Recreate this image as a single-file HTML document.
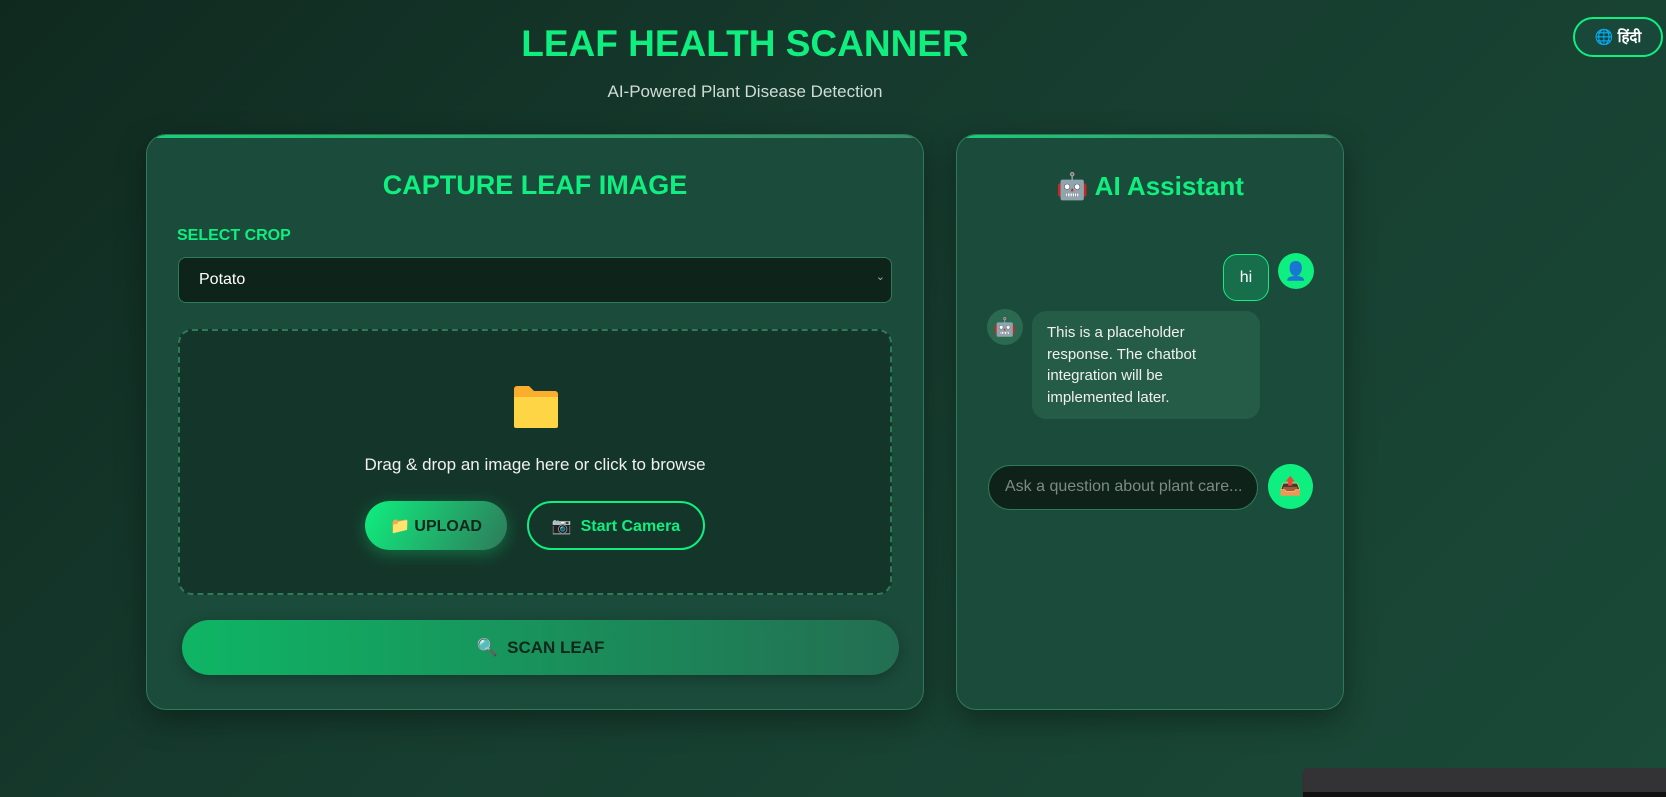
<!DOCTYPE html>
<html><head><meta charset="utf-8"><style>
*{box-sizing:border-box;margin:0;padding:0}
body{width:1666px;height:797px;overflow:hidden;position:relative;font-family:"Liberation Sans",sans-serif;background:linear-gradient(135deg,#10291f 0%,#163b2e 40%,#1a4a38 100%)}
.a{position:absolute}
.ttl{left:0;width:1490px;top:23px;text-align:center;color:#0fef7f;font-size:37px;font-weight:bold;letter-spacing:0}
.sub{left:0;width:1490px;top:82px;text-align:center;color:#d0dcd6;font-size:17px}
.card{background:#1b4b3b;border:1.5px solid #2f7a58;border-radius:20px;box-shadow:0 10px 30px rgba(0,0,0,.35);overflow:hidden}
.card:before{content:"";position:absolute;left:0;right:0;top:0;height:3px;background:linear-gradient(90deg,#18d078,#3a8a68)}
.h2{color:#0fef7f;font-weight:bold;font-size:27px;text-align:center}
.btn{border-radius:26px;font-weight:bold;font-size:16px;display:flex;align-items:center;justify-content:center}
.av{border-radius:50%;display:flex;align-items:center;justify-content:center}
</style></head><body>
<div class="a ttl">LEAF HEALTH SCANNER</div>
<div class="a sub">AI-Powered Plant Disease Detection</div>
<div class="a btn" style="left:1573px;top:17px;width:90px;height:40px;border:2.5px solid #0fef7f;background:#19473a;color:#fff;font-size:15px;border-radius:22px">🌐&nbsp;हिंदी</div>

<div class="a card" style="left:146px;top:134px;width:778px;height:576px">
  <div class="a h2" style="left:0;width:100%;top:35px">CAPTURE LEAF IMAGE</div>
  <div class="a" style="left:30px;top:92px;color:#0fef7f;font-size:16px;font-weight:bold">SELECT CROP</div>
  <div class="a" style="left:31px;top:122px;width:714px;height:46px;background:#0e241a;border:1.5px solid #2f7a58;border-radius:8px;color:#fff;font-size:16px;padding:13px 20px">Potato<span style="position:absolute;right:6px;top:12px;font-size:11px;color:#aaa">⌄</span></div>
  <div class="a" style="left:31px;top:194px;width:714px;height:266px;border:2.5px dashed #2f7a58;border-radius:14px;background:#14362a">
    <svg class="a" style="left:332px;top:54px" width="48" height="44" viewBox="0 0 48 44"><path d="M2 4a3 3 0 0 1 3-3h12l5 5h21a3 3 0 0 1 3 3v4H2z" fill="#fbad2e"/><path d="M2 12h44v29a2 2 0 0 1-2 2H4a2 2 0 0 1-2-2z" fill="#fdd545"/></svg>
    <div class="a" style="left:0;width:100%;top:124px;text-align:center;color:#f0f0f0;font-size:17px">Drag &amp; drop an image here or click to browse</div>
    <div class="a btn" style="left:185px;top:170px;width:142px;height:49px;background:linear-gradient(120deg,#0fef7f,#2e7a5a);color:#10271c;box-shadow:0 4px 16px rgba(15,239,127,.3)">📁&nbsp;UPLOAD</div>
    <div class="a btn" style="left:347px;top:170px;width:178px;height:49px;border:2.5px solid #0fef7f;color:#0fef7f">📷&nbsp;&nbsp;Start Camera</div>
  </div>
  <div class="a btn" style="left:35px;top:485px;width:717px;height:55px;border-radius:28px;background:linear-gradient(90deg,#0fb565,#236e52);color:#10271c;font-size:17px;box-shadow:0 4px 14px rgba(0,0,0,.25)">🔍&nbsp;&nbsp;SCAN LEAF</div>
</div>

<div class="a card" style="left:956px;top:134px;width:388px;height:576px">
  <div class="a h2" style="left:0;width:100%;top:36px;font-size:26px">🤖 AI Assistant</div>
  <div class="a av" style="left:266px;top:119px;width:46px;height:47px;border-radius:14px;background:#166e4a;border:1.5px solid #0fef7f;color:#fff;font-size:16px">hi</div>
  <div class="a av" style="left:321px;top:118px;width:36px;height:36px;background:#0fef7f;font-size:18px">👤</div>
  <div class="a av" style="left:30px;top:174px;width:36px;height:36px;background:#2b6a50;font-size:18px">🤖</div>
  <div class="a" style="left:75px;top:176px;width:228px;height:108px;border-radius:14px;background:#245c47;color:#f0f0f0;font-size:15px;line-height:21.5px;padding:11px 15px">This is a placeholder response. The chatbot integration will be implemented later.</div>
  <div class="a" style="left:31px;top:330px;width:270px;height:45px;border-radius:23px;background:#0e2219;border:1.5px solid #2f7a58;color:#7d8a84;font-size:16px;padding:12px 16px;white-space:nowrap;overflow:hidden">Ask a question about plant care...</div>
  <div class="a av" style="left:311px;top:329px;width:45px;height:45px;background:#0fef7f;font-size:18px">📤</div>
</div>

<div class="a" style="left:1302px;top:768px;width:364px;height:29px;background:#333336;border-radius:6px 0 0 0">
  <div class="a" style="left:1px;top:24px;right:0;height:5px;background:#111"></div>
</div>
</body></html>
